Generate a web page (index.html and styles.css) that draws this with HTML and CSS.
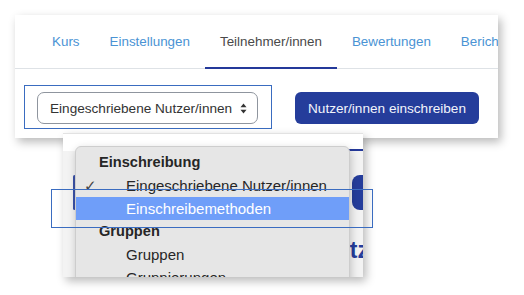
FILE: index.html
```html
<!DOCTYPE html>
<html lang="de">
<head>
    <meta charset="UTF-8">
    <meta name="viewport" content="width=device-width, initial-scale=1.0">
    <title>Teilnehmer/innen</title>
    <link rel="stylesheet" href="styles.css">
</head>
<body>
    <div class="canvas">
        <div class="shot shot-top">
            <nav class="tabs">
                <a class="tab">Kurs</a>
                <a class="tab">Einstellungen</a>
                <a class="tab active">Teilnehmer/innen</a>
                <a class="tab">Bewertungen</a>
                <a class="tab">Berichte</a>
            </nav>
            <div class="toolbar">
                <div class="select">
                    <span>Eingeschriebene Nutzer/innen</span>
                    <svg class="arrows" width="7" height="11" viewBox="0 0 7 11">
                        <path d="M3.5 0.5 L6.5 4.2 L0.5 4.2 Z" fill="#333"/>
                        <path d="M3.5 10.5 L6.5 6.8 L0.5 6.8 Z" fill="#333"/>
                    </svg>
                </div>
                <button class="btn-primary">Nutzer/innen einschreiben</button>
            </div>
        </div>

        <div class="mark mark-select"></div>

        <div class="shot shot-menu">
            <div class="page-strip">
                <span class="underline"></span>
            </div>
            <div class="page-row">
                <span class="edge-bar"></span>
                <span class="edge-btn"></span>
            </div>
            <div class="page-title">tz</div>

            <div class="menu">
                <div class="group">Einschreibung</div>
                <div class="item"><span class="check">✓</span>Eingeschriebene Nutzer/innen</div>
                <div class="item hover">Einschreibemethoden</div>
                <div class="group">Gruppen</div>
                <div class="item">Gruppen</div>
                <div class="item">Gruppierungen</div>
            </div>
        </div>

        <div class="mark mark-item"></div>
    </div>
</body>
</html>
```

FILE: styles.css
```css
body {
    margin: 0;
    background-color: #ffffff;
    font-family: 'Liberation Sans', Arial, sans-serif;
}
.canvas {
    position: relative;
    width: 524px;
    height: 295px;
    overflow: hidden;
}
.shot {
    position: absolute;
    background-color: #ffffff;
    overflow: hidden;
    box-shadow: 3px 4px 9px rgba(0, 0, 0, 0.28);
}
.shot-top {
    left: 15px;
    top: 15px;
    width: 483px;
    height: 123px;
}
.tabs {
    display: flex;
    padding-left: 22px;
    height: 53px;
    border-bottom: 1px solid #dee2e6;
    white-space: nowrap;
}
.tab {
    padding: 0 15px;
    line-height: 53px;
    font-size: 13.4px;
    color: #4a93d4;
}
.tab.active {
    color: #4a4a4a;
    box-shadow: inset 0 -2px 0 #24399a;
    height: 54px;
}
.toolbar {
    display: flex;
    align-items: center;
    gap: 37px;
    padding: 23px 0 0 22px;
}
.select {
    display: flex;
    align-items: center;
    justify-content: space-between;
    box-sizing: border-box;
    width: 221px;
    height: 32px;
    padding: 0 10px 0 12px;
    border: 1px solid #8f959e;
    border-radius: 7px;
    font-size: 13.6px;
    color: #333;
}
.btn-primary {
    height: 32px;
    width: 184px;
    border: none;
    border-radius: 6px;
    background-color: #253d9b;
    color: #f2f4fb;
    font-family: inherit;
    font-size: 13.6px;
    padding: 0;
}
.mark {
    position: absolute;
    border: 1px solid #3a6cc0;
}
.mark-select {
    left: 24px;
    top: 85px;
    width: 246px;
    height: 42px;
}
.mark-item {
    left: 51px;
    top: 189px;
    width: 320px;
    height: 37px;
}
.shot-menu {
    left: 63px;
    top: 133px;
    width: 300px;
    height: 144px;
    background-color: #f3f3f3;
    border-top: 1px solid #e2e2e2;
    box-sizing: border-box;
}
.page-strip {
    display: flex;
    justify-content: flex-end;
    align-items: flex-end;
    height: 17px;
    background-color: #ffffff;
}
.underline {
    width: 20px;
    height: 2px;
    background-color: #24399a;
}
.page-row {
    display: flex;
    justify-content: space-between;
    padding: 24px 0 0 10px;
    height: 35px;
}
.edge-bar {
    width: 3px;
    background-color: #3b52a8;
    border-radius: 2px;
}
.edge-btn {
    width: 14px;
    margin-right: -3px;
    background-color: #253d9b;
    border-radius: 8px 0 0 8px;
}
.page-title {
    text-align: right;
    margin: 28px -6px 0 0;
    font-size: 23px;
    font-weight: bold;
    color: #253d9b;
    line-height: 24px;
}
.menu {
    position: absolute;
    left: 12px;
    top: 12px;
    width: 275px;
    height: 150px;
    box-sizing: border-box;
    padding-top: 4px;
    background-color: #e6e6e6;
    border: 1px solid #cdcdcd;
    border-radius: 6px 6px 0 0;
    box-shadow: 1px 3px 8px rgba(0, 0, 0, 0.22);
    font-size: 15px;
    color: #262626;
    white-space: nowrap;
}
.group {
    height: 23px;
    line-height: 23px;
    padding-left: 23px;
    font-weight: bold;
    font-size: 14.6px;
}
.item {
    position: relative;
    height: 23px;
    line-height: 23px;
    padding-left: 50px;
}
.item.hover {
    background-color: #6f9ef9;
    color: #ffffff;
}
.check {
    position: absolute;
    left: 8px;
    font-size: 15px;
    color: #444;
}
```
